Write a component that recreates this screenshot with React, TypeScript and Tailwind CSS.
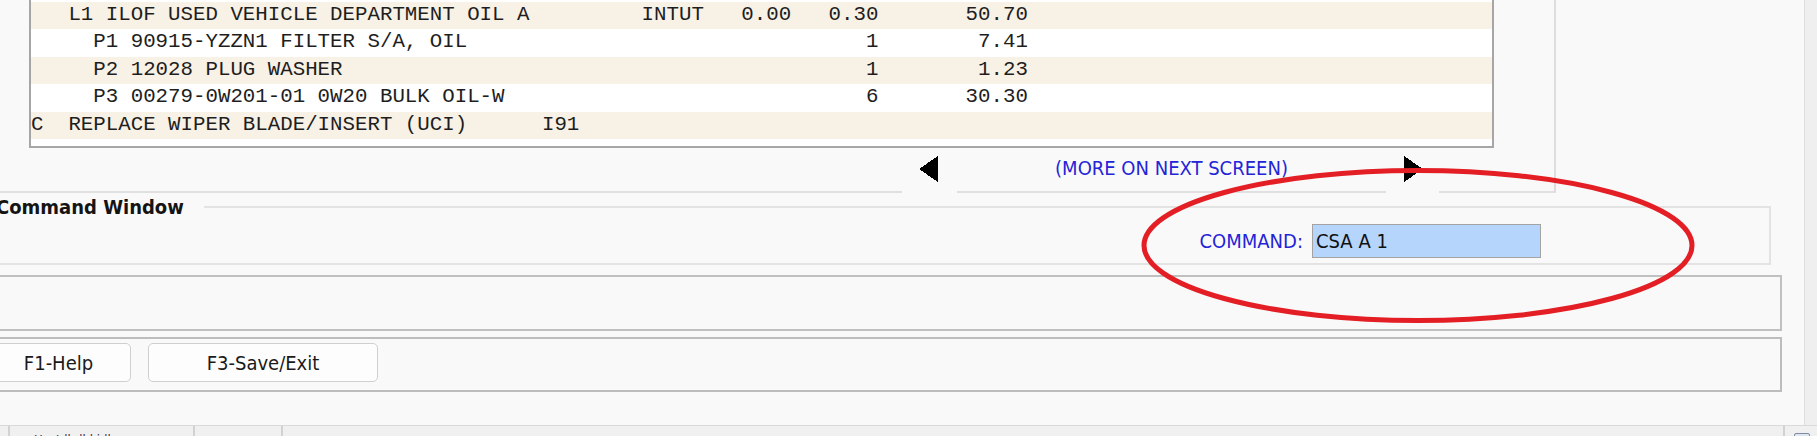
import React from 'react';

const COLS = 80;

// build one 80-column terminal line from text placed at fixed columns
const at = (...parts: [number, string][]) => {
  let s = ''.padEnd(COLS, ' ');
  for (const [col, text] of parts) {
    s = s.slice(0, col) + text + s.slice(col + text.length);
  }
  return s.trimEnd();
};

const lines = [
  at([3, 'L1 ILOF USED VEHICLE DEPARTMENT OIL A'], [49, 'INTUT'], [57, '0.00'], [64, '0.30'], [75, '50.70']),
  at([5, 'P1 90915-YZZN1 FILTER S/A, OIL'], [67, '1'], [76, '7.41']),
  at([5, 'P2 12028 PLUG WASHER'], [67, '1'], [76, '1.23']),
  at([5, 'P3 00279-0W201-01 0W20 BULK OIL-W'], [67, '6'], [75, '30.30']),
  at([0, 'C  REPLACE WIPER BLADE/INSERT (UCI)'], [41, 'I91']),
];

const ArrowLeft = () => (
  <svg width="19" height="26" viewBox="0 0 19 26" shapeRendering="crispEdges">
    <polygon points="19,0 19,26 0,13" fill="#000" />
  </svg>
);

const ArrowRight = () => (
  <svg width="19" height="26" viewBox="0 0 19 26" shapeRendering="crispEdges">
    <polygon points="0,0 0,26 19,13" fill="#000" />
  </svg>
);

const App = () => {
  return (
    <div className="relative w-[1817px] h-[436px] overflow-hidden bg-[#efefef] font-['DejaVu_Sans_Condensed','DejaVu_Sans',sans-serif]">
      <div className="flex h-[425px]">
        <div className="w-[1805px] h-full bg-[#f9f9f9] border-r border-[#dedede] flex flex-col">
          {/* repair order lines */}
          <div className="w-[1556px] h-[193px] shrink-0 border-r-2 border-[#dddddd] flex flex-col">
            <div className="ml-[29px] w-[1465px] h-[148px] shrink-0 bg-white border-x-2 border-b-2 border-[#a6a6a6] pt-[2px] font-['Liberation_Mono',monospace] text-[20.77px] text-[#1e1e1e]">
              {lines.map((line, i) => (
                <div
                  key={i}
                  className={`h-[27.4px] leading-[25.4px] whitespace-pre ${i % 2 === 0 ? 'bg-[#f8f1e6]' : 'bg-white'}`}
                >
                  {line}
                </div>
              ))}
            </div>
            <div className="flex h-[45px]">
              <div className="w-[902px] border-b-2 border-[#e0e0e0]" />
              <div className="w-[55px] flex items-center pl-[17px] pb-[4px]">
                <ArrowLeft />
              </div>
              <div className="w-[429px] border-b-2 border-[#e0e0e0] flex items-center justify-center pb-[4px] text-[20px] text-[#2424d8]">
                (MORE ON NEXT SCREEN)
              </div>
              <div className="w-[53px] flex items-center pl-[18px] pb-[4px]">
                <ArrowRight />
              </div>
              <div className="flex-1 border-b-2 border-[#e0e0e0]" />
            </div>
          </div>

          {/* command entry */}
          <fieldset className="mt-[2px] -ml-[10px] w-[1781px] h-[70px] shrink-0 border-2 border-[#e3e3e3] min-w-0">
            <legend className="pl-[4px] pr-[20px] text-[20px] leading-[24px] font-bold text-[#141414]">
              Command Window
            </legend>
            <div className="flex justify-end items-center pr-[228px] mt-[5px]">
              <span className="text-[20px] text-[#2424d8] mr-[9px]">COMMAND:</span>
              <div className="w-[229px] h-[34px] bg-[#b5d5fd] border border-[#a3a3a3] flex items-center pl-[3px] text-[20px] text-[#111]">
                CSA A 1
              </div>
            </div>
          </fieldset>

          {/* message line */}
          <div className="mt-[10px] -ml-[20px] w-[1802px] h-[56px] shrink-0 border-2 border-[#c0c0c0]" />

          {/* function keys */}
          <div className="mt-[6px] -ml-[20px] w-[1802px] h-[55px] shrink-0 border-2 border-[#bdbdbd] flex items-start gap-[17px] pt-[4px] pl-[4px]">
            <button className="w-[145px] h-[39px] rounded-[5px] border border-[#cfcfcf] bg-[#fdfdfd] text-[20px] text-[#1a1a1a]">
              F1-Help
            </button>
            <button className="w-[230px] h-[39px] rounded-[5px] border border-[#cfcfcf] bg-[#fdfdfd] text-[20px] text-[#1a1a1a]">
              F3-Save/Exit
            </button>
          </div>
        </div>
        <div className="flex-1" />
      </div>

      {/* status bar */}
      <div className="flex h-[11px] border-t border-[#d9d9d9] bg-[#f0f0f0]">
        <div className="w-[8px]" />
        <div className="w-[185px] border-l-2 border-[#d2d2d2] overflow-hidden pl-[24px] pt-[7px] text-[13px] leading-[14px] text-[#3a2a4a] whitespace-nowrap">
          Host lbdhl idle
        </div>
        <div className="w-[88px] border-l-2 border-[#d2d2d2]" />
        <div className="w-[1502px] border-l-2 border-[#d2d2d2]" />
        <div className="flex-1 border-l-2 border-[#d2d2d2] pl-[9px] pt-[7px]">
          <div className="w-[16px] h-[8px] rounded-[2px] border border-[#7d8ca3] bg-[#dfe6ef]" />
        </div>
      </div>

      {/* red markup ring */}
      <svg className="absolute left-[1139px] top-[165px]" width="560" height="165" viewBox="0 0 560 165">
        <ellipse cx="279" cy="80.5" rx="274" ry="75" fill="none" stroke="#e31e24" strokeWidth="5" />
      </svg>
    </div>
  );
};

export default App;
